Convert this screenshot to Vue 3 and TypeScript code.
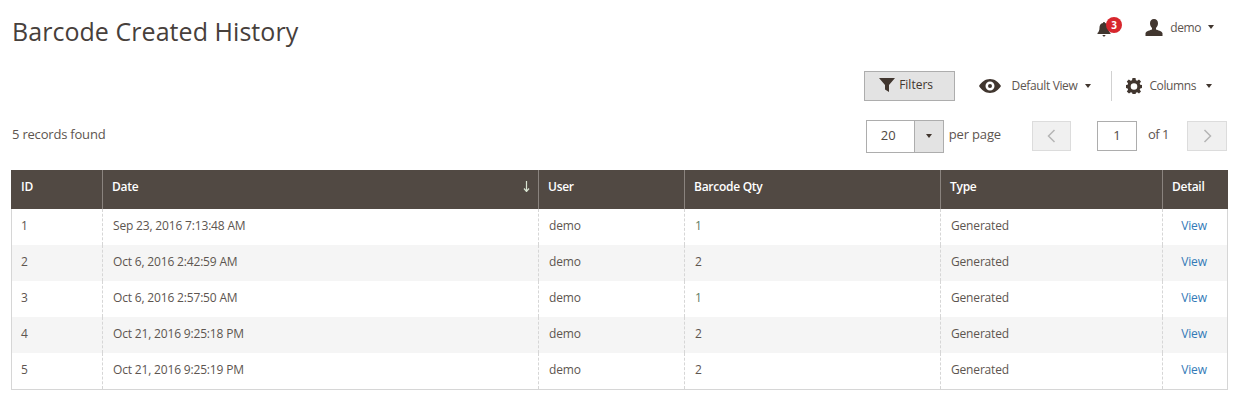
<script setup lang="ts">
interface Row { id: number; date: string; user: string; qty: number; type: string }
const rows: Row[] = [
  { id: 1, date: 'Sep 23, 2016 7:13:48 AM', user: 'demo', qty: 1, type: 'Generated' },
  { id: 2, date: 'Oct 6, 2016 2:42:59 AM', user: 'demo', qty: 2, type: 'Generated' },
  { id: 3, date: 'Oct 6, 2016 2:57:50 AM', user: 'demo', qty: 1, type: 'Generated' },
  { id: 4, date: 'Oct 21, 2016 9:25:18 PM', user: 'demo', qty: 2, type: 'Generated' },
  { id: 5, date: 'Oct 21, 2016 9:25:19 PM', user: 'demo', qty: 2, type: 'Generated' }
]
</script>

<template>
  <div class="page">
    <header class="top">
      <h1 class="title">Barcode Created History</h1>
      <div class="account">
        <div class="bell">
          <svg width="16" height="16" viewBox="0 0 16 16"><path fill="#41362f" d="M8 1c.7 0 1 .5 1 1 2.300.5 3.500 2.300 3.500 4.500 0 3 .8 4.500 2 5.500v1H1.500v-1c1.200-1 2-2.500 2-5.500C3.500 4.300 4.700 2.500 7 2c0-.5.300-1 1-1zM6.500 14h3c0 .8-.7 1.500-1.500 1.500S6.500 14.800 6.500 14z"/></svg>
          <span class="badge">3</span>
        </div>
        <div class="user">
          <svg width="18" height="17" viewBox="0 0 18 17"><path fill="#41362f" d="M9 0c2.500 0 4 1.800 4 4.300 0 2-.9 3.800-2 4.700v1.500c1.500.8 6 1.500 6.500 3.700V17H.5v-2.800C1 12 5.500 11.300 7 10.500V9C5.900 8.100 5 6.300 5 4.300 5 1.800 6.500 0 9 0z"/></svg>
          <span class="user-name">demo</span>
          <i class="caret"></i>
        </div>
      </div>
    </header>

    <div class="actions">
      <button class="filters">
        <svg width="16" height="14" viewBox="0 0 16 14"><path fill="#41362f" d="M0 0h16L10 7v7L6 11.500V7z"/></svg>
        <span>Filters</span>
      </button>
      <div class="view">
        <svg width="22" height="14" viewBox="0 0 22 14"><path fill="#41362f" fill-rule="evenodd" d="M11 0c4.500 0 8.500 2.800 11 7-2.500 4.200-6.500 7-11 7S2.500 11.200 0 7c2.500-4.200 6.500-7 11-7zm0 2.500a4.500 4.500 0 1 0 0 9 4.500 4.500 0 0 0 0-9zM11 5a2 2 0 1 1 0 4 2 2 0 0 1 0-4z"/></svg>
        <span class="view-label">Default View</span>
        <i class="caret"></i>
      </div>
      <div class="columns">
        <svg width="16" height="16" viewBox="0 0 16 16"><path fill="#41362f" fill-rule="evenodd" d="M6.500 0h3l.4 2.200 1.300.6L13 1.500 15 3.600l-1.300 1.800.5 1.300 1.800.4v3l-1.800.3-.5 1.300 1.300 1.800-2 2.100-1.800-1.300-1.300.5-.4 1.700h-3l-.3-1.700-1.300-.5-1.900 1.300L.8 13.500l1.300-1.800-.5-1.300L0 10V7l1.600-.3.500-1.300L.8 3.600l2-2.100 1.900 1.300L6 2.200zM8 5.200a3.300 3.300 0 1 0 0 6.600 3.300 3.300 0 0 0 0-6.600z"/></svg>
        <span class="columns-label">Columns</span>
        <i class="caret"></i>
      </div>
    </div>

    <div class="pager-row">
      <div class="found">5 records found</div>
      <div class="pager">
        <div class="select">
          <span class="select-value">20</span>
          <span class="select-btn"><i class="caret"></i></span>
        </div>
        <span class="per-page">per page</span>
        <button class="nav prev" aria-label="Previous">
          <svg width="9" height="14" viewBox="0 0 9 14"><path d="M7.500 1 1.500 7l6 6" fill="none" stroke="#b5b5b5" stroke-width="1.500"/></svg>
        </button>
        <div class="page-input">1</div>
        <span class="of">of 1</span>
        <button class="nav next" aria-label="Next">
          <svg width="9" height="14" viewBox="0 0 9 14"><path d="M1.500 1l6 6-6 6" fill="none" stroke="#b5b5b5" stroke-width="1.500"/></svg>
        </button>
      </div>
    </div>

    <table class="grid">
      <colgroup>
        <col class="c-id" /><col class="c-date" /><col class="c-user" />
        <col class="c-qty" /><col class="c-type" /><col class="c-detail" />
      </colgroup>
      <thead>
        <tr>
          <th>ID</th>
          <th class="sorted">Date
            <svg class="arrow" width="7" height="11" viewBox="0 0 7 11"><path d="M3.500 0v10M1 7.500l2.500 3 2.500-3" fill="none" stroke="#d9e4d2" stroke-width="1.200"/></svg>
          </th>
          <th>User</th>
          <th>Barcode Qty</th>
          <th>Type</th>
          <th>Detail</th>
        </tr>
      </thead>
      <tbody>
        <tr v-for="row in rows" :key="row.id">
          <td>{{ row.id }}</td>
          <td>{{ row.date }}</td>
          <td>{{ row.user }}</td>
          <td :class="{ one: row.qty === 1 }">{{ row.qty }}</td>
          <td>{{ row.type }}</td>
          <td class="detail"><a href="#">View</a></td>
        </tr>
      </tbody>
    </table>
  </div>
</template>

<style>
html, body { background: #fff; }
</style>

<style scoped>
.page {
  padding: 0 12px 0 11px;
  font-family: "Open Sans", "Noto Sans", sans-serif;
  font-size: 12px;
  color: #41362f;
}
.top {
  display: flex;
  justify-content: space-between;
  align-items: flex-start;
  height: 70px;
}
.title {
  margin: 12px 0 0 1px;
  font-size: 25px;
  line-height: 38px;
  font-weight: 400;
  letter-spacing: 0.05px;
  color: #47403b;
}
.account {
  display: flex;
  align-items: center;
  margin-top: 18px;
  height: 18px;
}
.bell {
  position: relative;
  width: 16px;
  height: 16px;
  margin: 3px 33px 0 0;
}
.badge {
  position: absolute;
  left: 10px;
  top: -4px;
  width: 16px;
  height: 16px;
  border-radius: 50%;
  background: #d7262d;
  color: #fff;
  font-size: 10px;
  font-weight: 700;
  line-height: 16px;
  text-align: center;
}
.user {
  display: flex;
  align-items: center;
  margin-right: 13px;
}
.user-name {
  margin: 0 7px 0 7px;
  color: #5d5550;
  letter-spacing: -0.4px;
}
.caret {
  display: inline-block;
  width: 0;
  height: 0;
  border-left: 3px solid transparent;
  border-right: 3px solid transparent;
  border-top: 4px solid #41362f;
}
.actions {
  display: flex;
  justify-content: flex-end;
  align-items: center;
  height: 32px;
  padding-right: 15px;
}
.filters {
  display: flex;
  align-items: center;
  justify-content: center;
  gap: 4px;
  width: 91px;
  height: 30px;
  margin-right: 24px;
  padding: 0 6px 3px 0;
  background: #e3e3e3;
  border: 1px solid #adadad;
  font: 400 12px "Open Sans", sans-serif;
  color: #41362f;
}
.view {
  display: flex;
  align-items: center;
  height: 30px;
  padding-right: 20px;
  border-right: 1px solid #d1d1d1;
}
.view-label { margin: 0 8px 0 11px; padding-bottom: 1px; color: #5d5550; letter-spacing: -0.36px; }
.columns {
  display: flex;
  align-items: center;
  padding-left: 14px;
}
.columns-label { margin: 0 10px 0 7px; padding-bottom: 1px; color: #5d5550; letter-spacing: -0.4px; }
.pager-row {
  display: flex;
  justify-content: space-between;
  align-items: center;
  margin-top: 17px;
  height: 34px;
  margin-bottom: 17px;
}
.found { margin-left: 1px; padding-bottom: 4px; font-size: 13px; letter-spacing: -0.2px; color: #5d5550; }
.pager {
  display: flex;
  align-items: center;
}
.select {
  display: flex;
  width: 78px;
  height: 33px;
  border: 1px solid #adadad;
  box-sizing: border-box;
}
.select-value {
  flex: 1;
  padding-left: 14px;
  line-height: 29px;
  font-size: 13px;
  color: #514943;
}
.select-btn {
  display: flex;
  align-items: center;
  justify-content: center;
  width: 28px;
  background: #e3e3e3;
  border-left: 1px solid #adadad;
}
.per-page { margin: 0 31px 4px 5px; font-size: 13px; letter-spacing: -0.15px; color: #5d5550; }
.nav {
  display: flex;
  align-items: center;
  justify-content: center;
  width: 39px;
  height: 30px;
  margin-bottom: 1px;
  padding: 0;
  background: #f0f0f0;
  border: 1px solid #dcdcdc;
}
.next { width: 40px; }
.page-input {
  width: 40px;
  height: 30px;
  margin: 0 0 1px 26px;
  box-sizing: border-box;
  border: 1px solid #adadad;
  text-align: center;
  line-height: 26px;
  font-size: 13px;
  color: #514943;
}
.of { width: 50px; margin-bottom: 4px; padding-left: 11px; box-sizing: border-box; font-size: 13px; letter-spacing: -0.5px; color: #5d5550; }
.grid {
  width: 1216px;
  border-collapse: collapse;
  table-layout: fixed;
}
.c-id { width: 91px; }
.c-date { width: 436px; }
.c-user { width: 146px; }
.c-qty { width: 256px; }
.c-type { width: 222px; }
.c-detail { width: 65px; }
th {
  height: 39px;
  box-sizing: border-box;
  padding: 0 9px 7px;
  background: #514943;
  border-left: 1px solid #8a837e;
  color: #fff;
  font-weight: 600;
  font-size: 12px;
  letter-spacing: -0.27px;
  text-align: left;
}
th:first-child { border-left-color: #514943; }
.sorted { position: relative; }
.arrow {
  position: absolute;
  right: 8px;
  top: 11px;
}
td {
  height: 36px;
  padding: 0 10px 4px;
  border-left: 1px dashed #d6d6d6;
  color: #5d5550;
  box-sizing: border-box;
  letter-spacing: -0.17px;
}
td:first-child { border-left: 1px solid #d6d6d6; padding-left: 9px; }
td:last-child { border-right: 1px solid #d6d6d6; }
tbody tr:nth-child(even) td { background: #f5f5f5; }
tbody tr:last-child td { border-bottom: 1px solid #d6d6d6; padding-bottom: 2px; }
.one { color: #5f7d62; }
.detail { text-align: center; padding: 0 11px 4px 9px; }
.detail a { color: #337ab7; text-decoration: none; }
</style>
